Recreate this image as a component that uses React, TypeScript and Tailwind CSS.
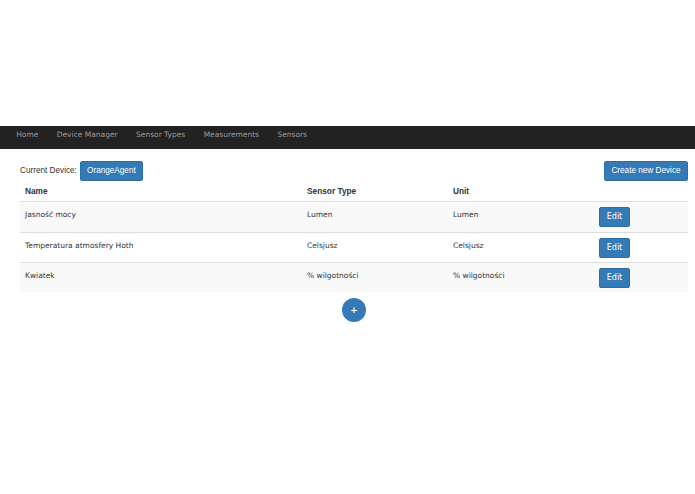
const navItems = ["Home", "Device Manager", "Sensor Types", "Measurements", "Sensors"];

const sensors = [
  { name: "Jasność mocy", type: "Lumen", unit: "Lumen" },
  { name: "Temperatura atmosfery Hoth", type: "Celsjusz", unit: "Celsjusz" },
  { name: "Kwiatek", type: "% wilgotności", unit: "% wilgotności" },
];

const sans = "font-['Liberation_Sans',Arial,sans-serif]";
const verdana = "font-['DejaVu_Sans',Verdana,sans-serif]";

export default function App() {
  return (
    <div className="w-full bg-white text-[#333]">
      <div className="h-[126px]" />

      {/* navbar */}
      <nav className={`flex h-[23px] items-center bg-[#222] pb-[6px] pl-[7px] ${verdana}`}>
        {navItems.map((item) => (
          <a key={item} className="px-[9.2px] text-[7.5px] leading-none text-[#9d9d9d]">
            {item}
          </a>
        ))}
      </nav>

      <div className="pl-[20px] pr-[7px]">
        <div className="mt-[12px] flex items-center justify-between">
          <div className="flex items-center">
            <span className={`text-[8.2px] ${sans}`}>Current Device:</span>
            <button
              className={`ml-[3px] flex h-[20px] w-[63px] items-center justify-center rounded-[2px] border border-[#2e6da4] bg-[#337ab7] text-[8.2px] text-white ${sans}`}
            >
              OrangeAgent
            </button>
          </div>
          <button
            className={`flex h-[20px] w-[84px] items-center justify-center rounded-[2px] border border-[#2e6da4] bg-[#337ab7] text-[8.2px] text-white ${sans}`}
          >
            Create new Device
          </button>
        </div>

        {/* table */}
        <div>
          <div
            className={`grid h-[21px] grid-cols-[282px_146px_146px_1fr] items-center border-b-[1.5px] border-[#ddd] text-[8.3px] font-bold ${sans}`}
          >
            <div className="px-[5px]">Name</div>
            <div className="px-[5px]">Sensor Type</div>
            <div className="px-[5px]">Unit</div>
            <div />
          </div>
          {sensors.map((s, i) => (
            <div
              key={s.name}
              className={`grid h-[30px] grid-cols-[282px_146px_146px_1fr] ${
                i > 0 ? "border-t border-[#ddd]" : ""
              } ${i % 2 === 0 ? "bg-[#f9f9f9]" : "bg-white"} text-[7.5px] ${verdana}`}
            >
              <div className="px-[5px] pt-[8px] leading-[9px]">{s.name}</div>
              <div className="px-[5px] pt-[8px] leading-[9px]">{s.type}</div>
              <div className="px-[5px] pt-[8px] leading-[9px]">{s.unit}</div>
              <div className="px-[5px] pt-[5px]">
                <button className="flex h-[20px] w-[31px] items-center justify-center rounded-[2px] border border-[#2e6da4] bg-[#337ab7] text-[8px] text-white">
                  Edit
                </button>
              </div>
            </div>
          ))}
        </div>

        <div className="mt-[6px] flex justify-center">
          <button
            className={`flex h-[24px] w-[24px] items-center justify-center rounded-full bg-[#337ab7] text-[9px] font-bold leading-none text-white ${verdana}`}
          >
            +
          </button>
        </div>
      </div>
    </div>
  );
}
